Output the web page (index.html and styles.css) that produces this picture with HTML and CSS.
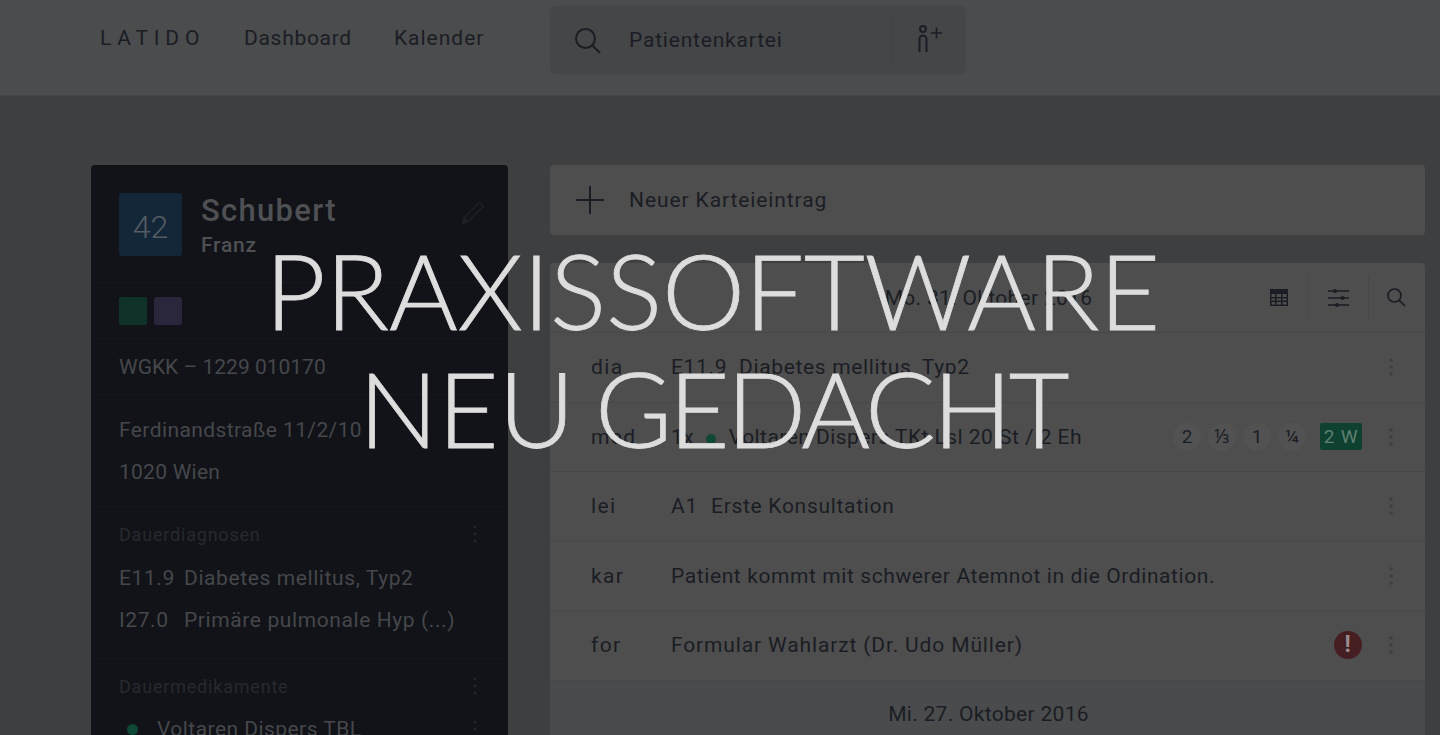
FILE: index.html
```html
<!DOCTYPE html>
<html>
    <head>
        <title>Latido</title>
        <link rel="stylesheet" href="styles.css">
    </head>
    <body>
        <header class="topbar">
            <div class="logo">LATIDO</div>
            <nav class="nav">
                <a>Dashboard</a>
                <a class="nav-wide">Kalender</a>
            </nav>
            <div class="search">
                <svg class="search-icon" width="28" height="30" viewBox="0 0 28 30" fill="none" stroke="#1b1d24" stroke-width="2">
                    <circle cx="10.500" cy="12.500" r="9.500"/>
                    <path d="M17.500 19.500 L25 27"/>
                </svg>
                <div class="search-text">Patientenkartei</div>
                <div class="search-add">
                    <svg width="26" height="30" viewBox="0 0 26 30" fill="none" stroke="#1b1d24" stroke-width="2">
                        <circle cx="6" cy="5" r="3"/>
                        <path d="M2.500 28 V15 a3.500 3.500 0 0 1 7 0 V28"/>
                        <path d="M14 9 H25 M19.500 3.500 V14.500" stroke-width="1.600"/>
                    </svg>
                </div>
            </div>
        </header>

        <main class="main">
            <aside class="patient">
                <section class="patient-head">
                    <div class="avatar">42</div>
                    <div class="names">
                        <div class="surname">Schubert</div>
                        <div class="firstname">Franz</div>
                    </div>
                    <svg class="pencil" width="24" height="24" viewBox="0 0 24 24" fill="none" stroke="#1f2125" stroke-width="1.200">
                        <path d="M1.500 22.500 L3 16.500 L18.500 1.500 L22.500 5 L7 20.500 Z"/>
                        <path d="M1.500 22.500 L3 16.500 L7 20.500 Z" fill="#1f2125"/>
                    </svg>
                </section>
                <section class="tags">
                    <span class="tag green"></span>
                    <span class="tag purple"></span>
                </section>
                <section class="insurance">WGKK – 1229 010170</section>
                <section class="address">
                    <div>Ferdinandstraße 11/2/10</div>
                    <div class="city">1020 Wien</div>
                </section>
                <section class="block diagnoses">
                    <div class="block-title">
                        <span>Dauerdiagnosen</span>
                        <svg class="kebab" width="4" height="18" viewBox="0 0 4 18"><circle cx="2" cy="2" r="1.500"/><circle cx="2" cy="9" r="1.500"/><circle cx="2" cy="16" r="1.500"/></svg>
                    </div>
                    <div class="diagnosis"><span class="code">E11.9</span>Diabetes mellitus, Typ2</div>
                    <div class="diagnosis"><span class="code">I27.0</span>Primäre pulmonale Hyp (...)</div>
                </section>
                <section class="block">
                    <div class="block-title">
                        <span>Dauermedikamente</span>
                        <svg class="kebab" width="4" height="18" viewBox="0 0 4 18"><circle cx="2" cy="2" r="1.500"/><circle cx="2" cy="9" r="1.500"/><circle cx="2" cy="16" r="1.500"/></svg>
                    </div>
                    <div class="medication">
                        <span class="dot"></span>
                        <span>Voltaren Dispers TBL</span>
                        <svg class="kebab" width="4" height="18" viewBox="0 0 4 18"><circle cx="2" cy="2" r="1.500"/><circle cx="2" cy="9" r="1.500"/><circle cx="2" cy="16" r="1.500"/></svg>
                    </div>
                </section>
            </aside>

            <div class="content">
                <div class="new-entry">
                    <svg width="28" height="28" viewBox="0 0 28 28" stroke="#1b1d24" stroke-width="2"><path d="M0 14 H28 M14 0 V28"/></svg>
                    <span>Neuer Karteieintrag</span>
                </div>

                <div class="card">
                    <div class="card-head">
                        <div class="date">Mo. 31. Oktober 2016</div>
                        <div class="tools">
                            <div class="tool table-tool">
                                <svg width="18" height="17" viewBox="0 0 18 17">
                                    <path fill="#1b1d24" d="M0 0 H18 V17 H0 Z M1.500 5 V8 H5 V5 Z M6.500 5 V8 H11 V5 Z M12.500 5 V8 H16.500 V5 Z M1.500 9.500 V11.500 H5 V9.500 Z M6.500 9.500 V11.500 H11 V9.500 Z M12.500 9.500 V11.500 H16.500 V9.500 Z M1.500 13 V15.500 H5 V13 Z M6.500 13 V15.500 H11 V13 Z M12.500 13 V15.500 H16.500 V13 Z" fill-rule="evenodd"/>
                                </svg>
                            </div>
                            <div class="tool">
                                <svg width="22" height="20" viewBox="0 0 22 20" stroke="#1b1d24" stroke-width="1.500" fill="#1b1d24">
                                    <path d="M0 3 H21 M0 10 H21 M0 17 H21"/>
                                    <circle cx="7" cy="3" r="2" stroke="none"/>
                                    <circle cx="14.500" cy="10" r="2" stroke="none"/>
                                    <circle cx="9" cy="17" r="2" stroke="none"/>
                                </svg>
                            </div>
                            <div class="tool">
                                <svg width="19" height="19" viewBox="0 0 19 19" fill="none" stroke="#1b1d24" stroke-width="1.700">
                                    <circle cx="7.500" cy="7.500" r="6.500"/>
                                    <path d="M12.300 12.300 L18 18"/>
                                </svg>
                            </div>
                        </div>
                    </div>

                    <div class="row">
                        <span class="kind">dia</span>
                        <div class="entry tight-dia"><span class="code-entry">E11.9</span>Diabetes mellitus, Typ2</div>
                        <svg class="more" width="4" height="18" viewBox="0 0 4 18"><circle cx="2" cy="2" r="1.800"/><circle cx="2" cy="9" r="1.800"/><circle cx="2" cy="16" r="1.800"/></svg>
                    </div>
                    <div class="row">
                        <span class="kind">med</span>
                        <div class="entry tight-med">1x <span class="dot dot-entry"></span>Voltaren Dispers TKt Lsl 20 St / 2 Eh</div>
                        <div class="doses">
                            <span class="dose">2</span>
                            <span class="dose">⅓</span>
                            <span class="dose">1</span>
                            <span class="dose">¼</span>
                            <span class="duration">2 W</span>
                        </div>
                        <svg class="more" width="4" height="18" viewBox="0 0 4 18"><circle cx="2" cy="2" r="1.800"/><circle cx="2" cy="9" r="1.800"/><circle cx="2" cy="16" r="1.800"/></svg>
                    </div>
                    <div class="row">
                        <span class="kind">lei</span>
                        <div class="entry tight-lei"><span class="code-short">A1</span>Erste Konsultation</div>
                        <svg class="more" width="4" height="18" viewBox="0 0 4 18"><circle cx="2" cy="2" r="1.800"/><circle cx="2" cy="9" r="1.800"/><circle cx="2" cy="16" r="1.800"/></svg>
                    </div>
                    <div class="row">
                        <span class="kind">kar</span>
                        <div class="entry tight-kar">Patient kommt mit schwerer Atemnot in die Ordination.</div>
                        <svg class="more" width="4" height="18" viewBox="0 0 4 18"><circle cx="2" cy="2" r="1.800"/><circle cx="2" cy="9" r="1.800"/><circle cx="2" cy="16" r="1.800"/></svg>
                    </div>
                    <div class="row">
                        <span class="kind">for</span>
                        <div class="entry wide-for">Formular Wahlarzt (Dr. Udo Müller)</div>
                        <span class="alert">!</span>
                        <svg class="more" width="4" height="18" viewBox="0 0 4 18"><circle cx="2" cy="2" r="1.800"/><circle cx="2" cy="9" r="1.800"/><circle cx="2" cy="16" r="1.800"/></svg>
                    </div>
                </div>

                <div class="next-date">Mi. 27. Oktober 2016</div>
            </div>
        </main>

        <h1 class="hero">PRAXISSOFTWARE<br>NEU <span class="hero-tight">GEDACHT</span></h1>
    </body>
</html>
```

FILE: styles.css
```css
html, body {
    margin: 0;
    height: 735px;
    overflow: hidden;
}
body {
    background: #3e3f41;
    color: #1b1d24;
    font-family: Roboto, "Noto Sans", sans-serif;
    font-size: 21px;
    letter-spacing: 0.8px;
}

/* top bar */
.topbar {
    height: 96px;
    box-sizing: border-box;
    display: flex;
    align-items: flex-start;
    padding-left: 100px;
    background: #4b4c4e;
    border-bottom: 1px solid #46474a;
}
.logo {
    width: 144px;
    margin-top: 26px;
    font-size: 21px;
    line-height: 24px;
    letter-spacing: 5.8px;
}
.nav {
    display: flex;
    gap: 42px;
    width: 306px;
    margin-top: 25px;
    letter-spacing: 0.7px;
    line-height: 26px;
}
.nav-wide {
    letter-spacing: 1px;
}
.search {
    width: 416px;
    height: 68px;
    margin-top: 6px;
    display: flex;
    align-items: center;
    padding-left: 25px;
    box-sizing: border-box;
    background: #454648;
    border-radius: 6px;
}
.search-icon {
    margin-top: 2px;
}
.search-text {
    flex: 1;
    margin-left: 26px;
}
.search-add {
    width: 75px;
    height: 44px;
    box-sizing: border-box;
    padding: 6px 0 0 25px;
    border-left: 1px solid #3f4042;
}

/* layout */
.main {
    display: flex;
    gap: 42px;
    padding: 69px 15px 0 91px;
}
.content {
    flex: 1;
}

/* patient column */
.patient {
    width: 417px;
    height: 570px;
    flex: none;
    box-sizing: border-box;
    background: #111318;
    border-radius: 4px 4px 0 0;
    color: #46474b;
    overflow: hidden;
}
.patient section {
    padding-left: 28px;
    padding-right: 32px;
    border-bottom: 1px solid #16181d;
}
.patient-head {
    height: 118px;
    box-sizing: border-box;
    display: flex;
    padding-top: 28px;
}
.avatar {
    width: 63px;
    height: 63px;
    flex: none;
    background: #132739;
    border-radius: 3px;
    color: #545b63;
    font-size: 32px;
    font-weight: 300;
    letter-spacing: 0;
    line-height: 68px;
    text-align: center;
}
.names {
    flex: 1;
    margin-left: 19px;
    color: #4f5053;
}
.surname {
    font-size: 31px;
    font-weight: 500;
    letter-spacing: 1.3px;
    line-height: 36px;
}
.firstname {
    font-size: 21px;
    font-weight: 500;
    line-height: 26px;
    margin-top: 3px;
}
.pencil {
    margin: 8px -9px 0 0;
}
.tags {
    height: 56px;
    box-sizing: border-box;
    display: flex;
    gap: 7px;
    padding-top: 14px;
}
.tag {
    width: 28px;
    height: 28px;
    border-radius: 2px;
}
.green {
    background: #0f3328;
}
.purple {
    background: #2a263c;
}
.insurance {
    height: 56px;
    box-sizing: border-box;
    letter-spacing: 0;
    line-height: 56px;
}
.address {
    height: 112px;
    box-sizing: border-box;
    padding-top: 14px;
    letter-spacing: 0.4px;
    line-height: 42px;
}
.city {
    letter-spacing: 0.25px;
}
.diagnoses {
    height: 152px;
    box-sizing: border-box;
    letter-spacing: 0.6px;
}
.block {
    padding-top: 14px;
}
.block-title {
    display: flex;
    justify-content: space-between;
    align-items: center;
    height: 26px;
    font-size: 18px;
    letter-spacing: 0.8px;
    color: #27292d;
}
.kebab {
    fill: #232529;
    margin-right: -1px;
}
.diagnosis {
    line-height: 42px;
    white-space: nowrap;
}
.diagnoses .block-title {
    margin-bottom: 10px;
}
.code {
    display: inline-block;
    width: 65px;
}
.medication {
    display: flex;
    align-items: center;
    margin-top: 16px;
    letter-spacing: 0.45px;
    line-height: 28px;
}
.medication span:nth-child(2) {
    flex: 1;
}
.dot {
    display: inline-block;
    width: 11px;
    height: 11px;
    border-radius: 50%;
    background: #0f4836;
}
.medication .dot {
    margin: 0 19px 0 8px;
}

/* right column */
.new-entry {
    height: 70px;
    display: flex;
    align-items: center;
    gap: 25px;
    padding-left: 26px;
    box-sizing: border-box;
    background: #4e4e4e;
    border-radius: 4px;
    letter-spacing: 0.9px;
}
.card {
    margin-top: 28px;
    background: #4e4e4e;
    border-radius: 4px 4px 0 0;
}
.card-head {
    height: 70px;
    display: flex;
    align-items: center;
    box-sizing: border-box;
    border-bottom: 1px solid #484849;
}
.date {
    flex: 1;
    text-align: center;
    padding-left: 178px;
    letter-spacing: 0.3px;
}
.tools {
    display: flex;
    align-items: center;
}
.tool {
    height: 43px;
    width: 59px;
    display: flex;
    align-items: center;
    justify-content: center;
    border-left: 1px solid #484849;
}
.table-tool {
    border-left: 0;
}
.tool:last-child {
    width: 54px;
    padding-right: 2px;
}
.row {
    height: 69.5px;
    box-sizing: border-box;
    display: flex;
    align-items: center;
    padding: 0 32px 0 41px;
    border-bottom: 1px solid #484849;
}
.kind {
    width: 80px;
    flex: none;
    letter-spacing: 1.400px;
}
.entry {
    flex: 1;
    white-space: nowrap;
}
.tight-dia {
    letter-spacing: 0.65px;
}
.tight-med {
    letter-spacing: 0.45px;
}
.tight-lei {
    letter-spacing: 0.7px;
}
.tight-kar {
    letter-spacing: 0.6px;
}
.wide-for {
    letter-spacing: 0.86px;
}
.code-entry {
    display: inline-block;
    width: 68px;
}
.code-short {
    display: inline-block;
    width: 40px;
}
.dot-entry {
    width: 10px;
    height: 10px;
    margin: 0 13px 0 6px;
}
.doses {
    display: flex;
    align-items: center;
    gap: 7px;
    margin-right: 27px;
}
.dose {
    width: 28px;
    height: 28px;
    border-radius: 50%;
    background: #525253;
    font-size: 19px;
    letter-spacing: 0;
    line-height: 28px;
    text-align: center;
}
.duration {
    width: 42px;
    height: 27px;
    margin-left: 7px;
    background: #0f4131;
    border-radius: 2px;
    color: #5f7f73;
    font-size: 19px;
    line-height: 27px;
    text-align: center;
}
.alert {
    width: 28px;
    height: 28px;
    margin-right: 27px;
    border-radius: 50%;
    background: #451e21;
    color: #9a8c8d;
    font-size: 23px;
    font-weight: 700;
    line-height: 28px;
    text-align: center;
}
.more {
    fill: #3f3f40;
    flex: none;
}
.next-date {
    height: 55px;
    padding-left: 2px;
    letter-spacing: 0.3px;
    line-height: 66px;
    text-align: center;
    background: #4a4b4c;
}

/* headline over everything */
.hero {
    position: absolute;
    left: 0;
    top: 230px;
    width: 1425px;
    margin: 0;
    color: #dddddd;
    font-family: Lato, sans-serif;
    font-size: 105px;
    font-weight: 300;
    letter-spacing: -0.2px;
    word-spacing: -8px;
    line-height: 118px;
    text-align: center;
    -webkit-text-stroke: 0.8px #dddddd;
}
.hero-tight {
    letter-spacing: -3.3px;
}
```
